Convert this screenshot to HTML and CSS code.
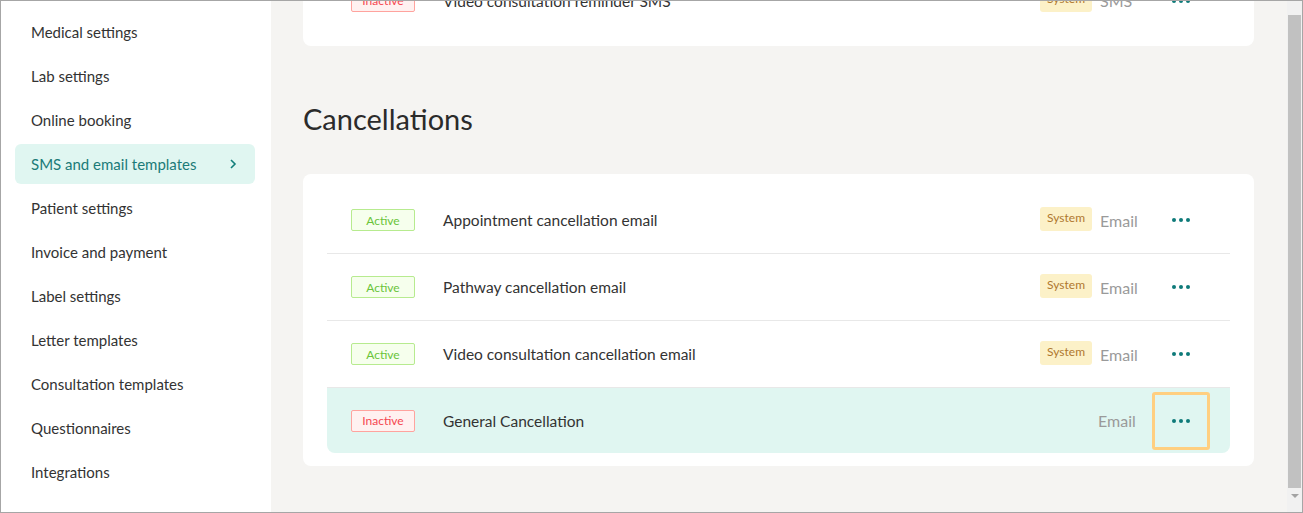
FILE: index.html
```html
<!DOCTYPE html>
<html>
<head>
<meta charset="utf-8">
<link rel="stylesheet" href="styles.css">
</head>
<body>
<div class="frame">
  <nav class="sidebar">
    <div class="nav-item">Medical settings</div>
    <div class="nav-item">Lab settings</div>
    <div class="nav-item">Online booking</div>
    <div class="nav-item active">SMS and email templates
      <svg class="chev" width="8" height="12" viewBox="0 0 8 12"><path d="M2 2l4 4-4 4" fill="none" stroke="currentColor" stroke-width="1.6"/></svg>
    </div>
    <div class="nav-item">Patient settings</div>
    <div class="nav-item">Invoice and payment</div>
    <div class="nav-item">Label settings</div>
    <div class="nav-item">Letter templates</div>
    <div class="nav-item">Consultation templates</div>
    <div class="nav-item">Questionnaires</div>
    <div class="nav-item">Integrations</div>
  </nav>
  <main class="main">
    <section class="card card-top">
      <div class="row">
        <div class="status"><span class="badge inactive">Inactive</span></div>
        <div class="title">Video consultation reminder SMS</div>
        <span class="sys">System</span>
        <span class="channel">SMS</span>
        <button class="more"><i></i><i></i><i></i></button>
      </div>
    </section>
    <h2 class="heading">Cancellations</h2>
    <section class="card">
      <div class="row">
        <div class="status"><span class="badge active">Active</span></div>
        <div class="title">Appointment cancellation email</div>
        <span class="sys">System</span>
        <span class="channel">Email</span>
        <button class="more"><i></i><i></i><i></i></button>
      </div>
      <div class="row">
        <div class="status"><span class="badge active">Active</span></div>
        <div class="title">Pathway cancellation email</div>
        <span class="sys">System</span>
        <span class="channel">Email</span>
        <button class="more"><i></i><i></i><i></i></button>
      </div>
      <div class="row">
        <div class="status"><span class="badge active">Active</span></div>
        <div class="title">Video consultation cancellation email</div>
        <span class="sys">System</span>
        <span class="channel">Email</span>
        <button class="more"><i></i><i></i><i></i></button>
      </div>
      <div class="row hover">
        <div class="status"><span class="badge inactive">Inactive</span></div>
        <div class="title">General Cancellation</div>
        <span class="channel">Email</span>
        <button class="more focus"><i></i><i></i><i></i></button>
      </div>
    </section>
  </main>
  <div class="scrollbar">
    <div class="thumb"></div>
    <div class="arrow"></div>
  </div>
</div>
</body>
</html>
```

FILE: styles.css
```css
* { box-sizing: border-box; }
html, body { margin: 0; padding: 0; }
body {
  font-family: Lato, "Noto Sans", sans-serif;
  color: #333;
  width: 1303px;
  height: 513px;
  overflow: hidden;
}
.frame {
  width: 1303px;
  height: 513px;
  border: 1px solid #a6a6a6;
  display: flex;
  overflow: hidden;
}
.sidebar {
  width: 270px;
  flex: none;
  background: #fff;
  padding: 11px 16px 0 14px;
  display: flex;
  flex-direction: column;
  gap: 4px;
}
.nav-item {
  height: 40px;
  display: flex;
  align-items: center;
  justify-content: space-between;
  padding: 0 18px 0 16px;
  font-size: 15px;
  color: #333;
  border-radius: 6px;
}
.nav-item.active {
  background: #e0f6f1;
  color: #1b7b78;
}
.chev { color: #127e7b; }
.main {
  flex: 1;
  background: #f5f4f2;
  padding: 0 33px 0 32px;
  overflow: hidden;
}
.card {
  background: #fff;
  border-radius: 8px;
  padding: 13px 24px 13px;
}
.card-top {
  margin-top: -46px;
  height: 91px;
  padding-top: 13px;
  border-radius: 0 0 8px 8px;
}
.heading {
  margin: 0;
  height: 128px;
  padding-top: 53px;
  font-size: 29px;
  font-weight: 400;
  line-height: 40px;
  color: #2b2b2b;
}
.row {
  display: flex;
  align-items: center;
  height: 67px;
  padding: 0 20px 0 24px;
  border-bottom: 1px solid #e8e8e8;
}
.row:last-child { border-bottom: none; height: 65px; }
.row.hover {
  background: #e0f6f1;
  border-radius: 0 0 8px 8px;
}
.status { width: 92px; flex: none; }
.badge {
  display: inline-flex;
  align-items: center;
  justify-content: center;
  width: 64px;
  height: 22px;
  font-size: 12px;
  border-radius: 2px;
  border: 1px solid;
}
.badge.active { color: #6ac43a; background: #f6ffed; border-color: #b7eb8f; }
.badge.inactive { color: #f5464f; background: #fff1f0; border-color: #ffa39e; }
.title { flex: 1; font-size: 15.5px; color: #333; }
.sys {
  background: #fcf1c8;
  color: #b0782f;
  font-size: 12px;
  height: 24px;
  line-height: 22px;
  padding: 0 7px;
  border-radius: 3px;
  margin-right: 8px;
  margin-top: -2px;
}
.channel { font-size: 16px; color: #9a9a9a; width: 38px; }
.more {
  width: 58px;
  height: 58px;
  margin-left: 14px;
  border: 3px solid transparent;
  border-radius: 3px;
  background: transparent;
  display: flex;
  align-items: center;
  justify-content: center;
  gap: 3px;
  padding: 0;
}
.more i {
  width: 4px;
  height: 4px;
  border-radius: 50%;
  background: #0e7a79;
}
.more.focus { border-color: #ffcf80; margin-left: 16px; }
.scrollbar {
  width: 15px;
  flex: none;
  background: #f1f1f1;
  display: flex;
  flex-direction: column;
  align-items: center;
  padding: 14px 0 0;
}
.thumb {
  width: 13px;
  height: 473px;
  background: #c1c1c1;
}
.arrow {
  margin-top: 6px;
  width: 0;
  height: 0;
  border-left: 4px solid transparent;
  border-right: 4px solid transparent;
  border-top: 4px solid #a3a3a3;
}
```
